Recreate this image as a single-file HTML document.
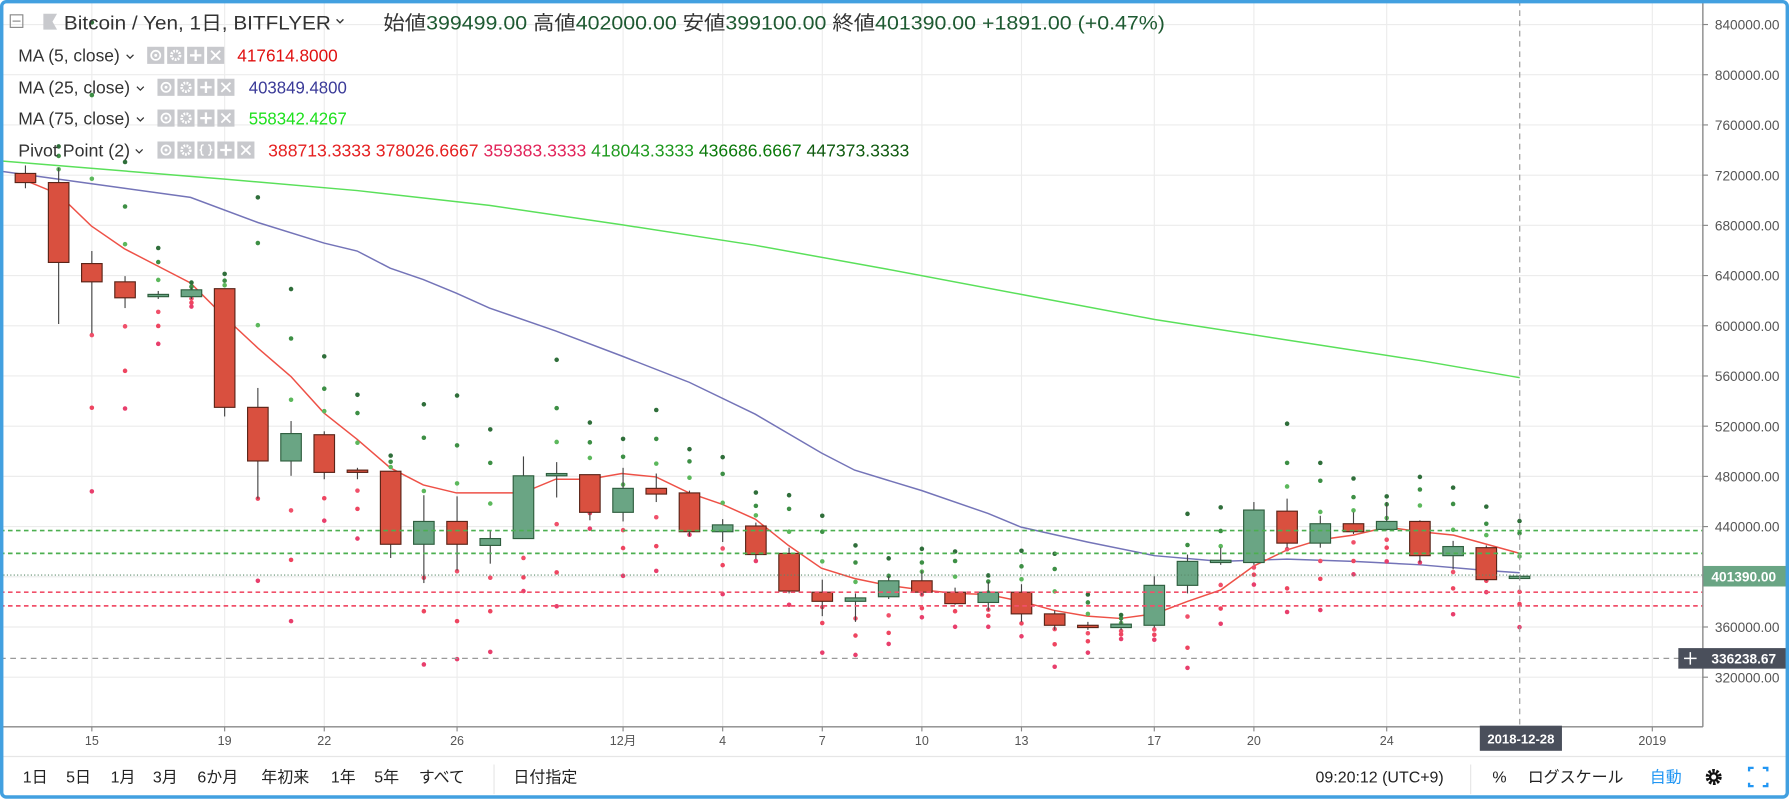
<!DOCTYPE html>
<html><head><meta charset="utf-8"><style>
html,body{margin:0;padding:0;background:#fff;overflow:hidden}
svg{display:block}
text{font-family:"Liberation Sans","Noto Sans CJK JP",sans-serif}
</style></head><body>
<svg id="s" width="1789" height="801" viewBox="0 0 1568 702" preserveAspectRatio="none" xmlns="http://www.w3.org/2000/svg">
<rect x="0" y="0" width="1568" height="702" fill="#fff"/>
<g id="grid" stroke="#ececec" stroke-width="1"></g>
<polyline fill="none" stroke="#5ae05a" stroke-width="1.3" points="0,141 197,157 313,167 429,180 545,197 662,215 778,236 895,258 1012,280 1128,298 1245,316 1332,331"/>
<polyline fill="none" stroke="#7474b8" stroke-width="1.3" points="0,150 51,157 109,165 167,173 226,195 284,213 313,220 342,235 371,245 400,257 429,270 487,290 545,312 604,335 662,363 720,397 749,412 808,430 866,450 895,462 953,475 1012,487 1070,492 1128,490 1186,492 1245,495 1303,500 1332,502"/>
<polyline fill="none" stroke="#ee5147" stroke-width="1.3" points="22,158 51,170 80,198 109,218 138,233 167,248 197,278 226,305 255,330 284,362 313,385 342,410 371,425 400,432 429,432 458,432 487,420 516,420 545,415 575,418 604,432 633,442 662,455 691,478 720,498 749,507 778,513 808,517 837,520 866,521 895,527 924,535 953,540 982,542 1012,538 1041,527 1070,517 1099,496 1128,482 1157,473 1186,469 1216,462 1245,466 1274,469 1303,477 1332,485"/>
<g id="dots"></g>
<g id="candles"></g>
<line x1="0" y1="465" x2="1492" y2="465" stroke="#4caf50" stroke-width="1.5" stroke-dasharray="4,3"/>
<line x1="0" y1="485" x2="1492" y2="485" stroke="#4caf50" stroke-width="1.5" stroke-dasharray="4,3"/>
<line x1="0" y1="519" x2="1492" y2="519" stroke="#f0506a" stroke-width="1.5" stroke-dasharray="4,3"/>
<line x1="0" y1="531" x2="1492" y2="531" stroke="#f0506a" stroke-width="1.5" stroke-dasharray="4,3"/>
<line x1="0" y1="504" x2="1492" y2="504" stroke="#5a8a6a" stroke-width="1" stroke-dasharray="1,2"/>
<line x1="0" y1="577" x2="1492" y2="577" stroke="#999" stroke-width="1" stroke-dasharray="5,4"/>
<line x1="1332" y1="0" x2="1332" y2="637" stroke="#999" stroke-width="1" stroke-dasharray="5,4"/>
<line x1="1492.5" y1="0" x2="1492.5" y2="637" stroke="#888" stroke-width="1.2"/>
<line x1="0" y1="637" x2="1492.5" y2="637" stroke="#888" stroke-width="1.2"/>
<g id="ax" font-size="12" fill="#555"></g>
<rect x="1493" y="496" width="75" height="18" fill="#6aa584"/>
<text x="1500" y="509.5" font-size="12" fill="#fff" font-weight="bold">401390.00</text>
<rect x="1471" y="568" width="97" height="18" fill="#4a4f5b"/>
<path d="M1476 577h11M1481.5 571.5v11" stroke="#fff" stroke-width="1.3"/>
<text x="1500" y="581.5" font-size="12" fill="#fff" font-weight="bold">336238.67</text>
<rect x="1297" y="636" width="72" height="22" fill="#4a4f5b"/>
<text x="1333" y="651.5" font-size="11.5" fill="#fff" font-weight="bold" text-anchor="middle">2018-12-28</text>
<line x1="0" y1="663" x2="1568" y2="663" stroke="#e6e6e6"/>
<g font-size="14" fill="#222">
<text x="20" y="686">1日</text><text x="58" y="686">5日</text><text x="97" y="686">1月</text><text x="134" y="686">3月</text><text x="173" y="686">6か月</text><text x="229" y="686">年初来</text><text x="290" y="686">1年</text><text x="328" y="686">5年</text><text x="367" y="686">すべて</text>
<text x="450" y="686">日付指定</text>
<text x="1153" y="686">09:20:12 (UTC+9)</text>
<text x="1308" y="686">%</text>
<text x="1339" y="686">ログスケール</text>
<text x="1446" y="686" fill="#2196f3">自動</text>
</g>
<line x1="433" y1="670" x2="433" y2="696" stroke="#e6e6e6"/>
<line x1="1289" y1="670" x2="1289" y2="696" stroke="#e6e6e6"/>
<g transform="translate(1502,681)">
<circle r="5.5" fill="none" stroke="#111" stroke-width="3" stroke-dasharray="2.2,1.3"/>
<circle r="3.2" fill="none" stroke="#111" stroke-width="2"/>
</g>
<path d="M1533 676v-3h4M1545 673h4v3M1549 686v3h-4M1537 689h-4v-3" fill="none" stroke="#2196f3" stroke-width="2"/>
<rect x="9" y="13" width="11" height="11" fill="none" stroke="#888" stroke-width="1"/>
<line x1="11" y1="18.5" x2="18" y2="18.5" stroke="#888"/>
<path d="M38 12h12l-4 7 4 7h-12z" fill="#c8c9cd"/>
<g font-size="17" fill="#333">
<text x="56" y="26" textLength="234" lengthAdjust="spacingAndGlyphs">Bitcoin / Yen, 1日, BITFLYER</text>
<text x="336" y="26" textLength="685" lengthAdjust="spacingAndGlyphs">始値<tspan fill="#1e5a32">399499.00</tspan>  高値<tspan fill="#1e5a32">402000.00</tspan>  安値<tspan fill="#1e5a32">399100.00</tspan>  終値<tspan fill="#1e5a32">401390.00</tspan>  <tspan fill="#1e5a32">+1891.00 (+0.47%)</tspan></text>
</g>
<path d="M295 17l3 3 3-3" fill="none" stroke="#333" stroke-width="1.2"/>
<g font-size="15" fill="#333">
<text x="16" y="54" textLength="89" lengthAdjust="spacingAndGlyphs">MA (5, close)</text>
<text x="16" y="82" textLength="98" lengthAdjust="spacingAndGlyphs">MA (25, close)</text>
<text x="16" y="109" textLength="98" lengthAdjust="spacingAndGlyphs">MA (75, close)</text>
<text x="16" y="137" textLength="98" lengthAdjust="spacingAndGlyphs">Pivot Point (2)</text>
<text x="208" y="54" fill="#e01010" textLength="88" lengthAdjust="spacingAndGlyphs">417614.8000</text>
<text x="218" y="82" fill="#3a3a98" textLength="86" lengthAdjust="spacingAndGlyphs">403849.4800</text>
<text x="218" y="109" fill="#1ee01e" textLength="86" lengthAdjust="spacingAndGlyphs">558342.4267</text>
<text x="235" y="137" textLength="562" lengthAdjust="spacingAndGlyphs"><tspan fill="#e52020">388713.3333</tspan> <tspan fill="#e52020">378026.6667</tspan> <tspan fill="#e2245a">359383.3333</tspan> <tspan fill="#1f9a1f">418043.3333</tspan> <tspan fill="#0c7a0c">436686.6667</tspan> <tspan fill="#0f5a0f">447373.3333</tspan></text>
</g>
<g id="icons"></g>
<g fill="none" stroke="#333" stroke-width="1.1">
<path d="M111 48l3 3 3-3M120 76l3 3 3-3M120 103l3 3 3-3M119 131l3 3 3-3"/>
</g>
<rect x="1.5" y="1.5" width="1565" height="697" rx="4" fill="none" stroke="#42a0e0" stroke-width="3"/>
</svg>
<script>
var NS="http://www.w3.org/2000/svg";
function el(p,t,a){var e=document.createElementNS(NS,t);for(var k in a)e.setAttribute(k,a[k]);document.getElementById(p).appendChild(e);return e;}
function X(d){return 80.5+d*29.1;}
for(var k=0;k<14;k++){var y=21.5+k*44;el('grid','line',{x1:0,y1:y,x2:1492,y2:y});}
var days=[0,4,7,11,16,19,22,25,28,32,35,39,43,47];
var labs=['15','19','22','26','12月','4','7','10','13','17','20','24','','2019'];
days.forEach(function(d,i){var x=X(d);if(d!=43)el('grid','line',{x1:x,y1:0,x2:x,y2:637});
el('ax','line',{x1:x,y1:637,x2:x,y2:641,stroke:'#888'});
if(labs[i]){var t=el('ax','text',{x:x,y:653,'text-anchor':'middle','font-size':'11'});t.textContent=labs[i];}});
for(var k=0;k<14;k++){var y=21.5+k*44;var p=840000-k*40000;
el('ax','line',{x1:1492,y1:y,x2:1497,y2:y,stroke:'#888'});
var t=el('ax','text',{x:1503,y:y+4.5});t.textContent=p+'.00';}
var C=[[-2,152,160,145,165,0],[-1,160,230,147,284,0],[0,231,247,220,292,0],[1,247,261,242,270,0],[2,258,260,255,262,1],[3,254,260,252,262,1],
[4,253,357,253,365,0],[5,357,404,340,437,0],[6,380,404,369,417,1],[7,381,414,378,420,0],[8,412,414,410,420,0],[9,413,477,413,489,0],
[10,457,477,434,511,1],[11,457,477,435,500,0],[12,472,478,465,494,1],[13,417,472,400,472,1],[14,415,417,405,436,1],[15,416,449,416,456,0],
[16,428,449,410,457,1],[17,428,433,415,440,0],[18,432,466,430,470,0],[19,460,466,455,475,1],[20,461,486,458,490,0],[21,485,518,480,520,0],
[22,519,527,508,540,0],[23,524,527,520,545,1],[24,509,523,505,525,1],[25,509,519,500,522,0],[26,519,529,515,530,0],[27,519,528,510,535,1],
[28,519,538,512,545,0],[29,538,548,535,552,0],[30,548,550,545,552,0],[31,547,550,543,552,1],[32,513,548,505,550,1],[33,492,513,486,520,1],
[34,491,493,480,495,1],[35,447,493,440,495,1],[36,448,476,437,480,0],[37,459,476,452,480,1],[38,459,466,449,468,0],[39,457,464,440,465,1],
[40,457,487,456,493,0],[41,479,487,474,499,1],[42,480,508,478,509,0],[43,505,507,504,508,1]];
C.forEach(function(c,i){var x=X(c[0]);
el('candles','line',{x1:x,y1:c[3],x2:x,y2:c[4],stroke:'#444','stroke-width':1});
el('candles','rect',{x:x-9,y:c[1],width:18,height:Math.max(1.5,c[2]-c[1]),fill:c[5]?'#6aa584':'#d9503f',stroke:c[5]?'#2e5e3e':'#5a2418','stroke-width':1});
if(i>0){var q=C[i-1];var H=q[3],L=q[4],Cl=q[5]?q[1]:q[2];var P=(H+L+Cl)/3;
var R1=2*P-L,S1=2*P-H,R2=P-(L-H),S2=P+(L-H),R3=H-2*(L-P),S3=L+2*(P-H);
[[R1,'#5cb85c'],[R2,'#3d8f45'],[R3,'#2f6e3a'],[S1,'#f0506a'],[S2,'#ee4560'],[S3,'#e83e6c']].forEach(function(r){
if(r[0]>5&&r[0]<630)el('dots','circle',{cx:x,cy:r[0],r:2,fill:r[1]});});}
});
function icons(x0,y0,n){for(var i=0;i<n;i++){var x=x0+i*17.5;
el('icons','rect',{x:x,y:y0,width:15,height:15,fill:'#c8c9cd'});
var cx=x+7.5,cy=y0+7.5;
if(i==0){el('icons','circle',{cx:cx,cy:cy,r:4,fill:'none',stroke:'#fff','stroke-width':1.5});el('icons','circle',{cx:cx,cy:cy,r:1.3,fill:'#fff'});}
else if(i==1){el('icons','circle',{cx:cx,cy:cy,r:3.8,fill:'none',stroke:'#fff','stroke-width':2.4,'stroke-dasharray':'1.6,1'});}
else if(n==5&&i==2){el('icons','path',{d:'M'+(cx-2)+' '+(cy-4.5)+'q-2 0-2 2v1.5l-1 1 1 1v1.5q0 2 2 2M'+(cx+2)+' '+(cy-4.5)+'q2 0 2 2v1.5l1 1-1 1v1.5q0 2-2 2',fill:'none',stroke:'#fff','stroke-width':1.3});}
else if(i==n-1){el('icons','path',{d:'M'+(cx-4)+' '+(cy-4)+'l8 8M'+(cx+4)+' '+(cy-4)+'l-8 8',stroke:'#fff','stroke-width':1.6});}
else{el('icons','path',{d:'M'+(cx-5)+' '+cy+'h10M'+cx+' '+(cy-5)+'v10',stroke:'#fff','stroke-width':2});}
}}
icons(129,41,4);icons(138,69,4);icons(138,96,4);icons(138,124,5);
</script>
</body></html>
